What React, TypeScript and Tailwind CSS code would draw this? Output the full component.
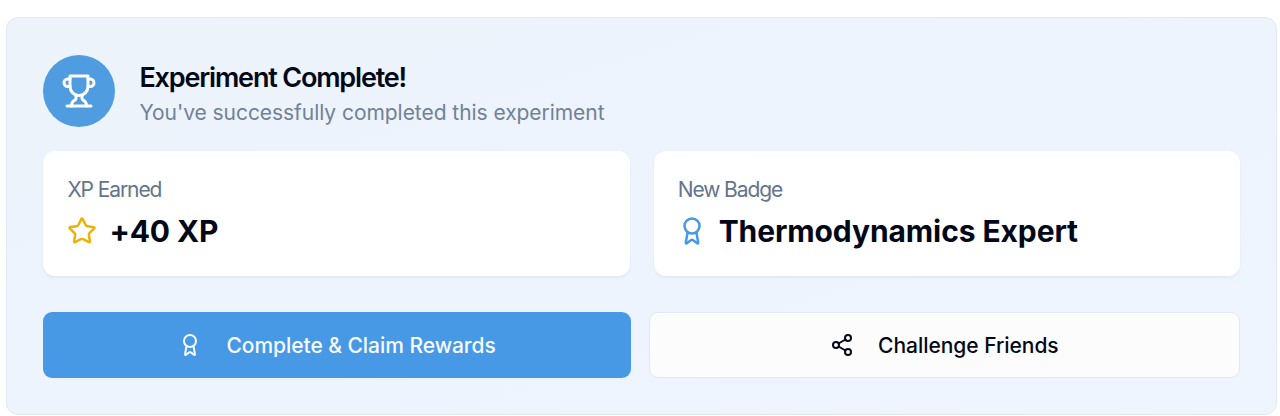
import { Award, Share2, Star } from "lucide-react";

function Trophy() {
  return (
    <svg
      className="size-9 text-white"
      viewBox="0 0 24 24"
      fill="none"
      stroke="currentColor"
      strokeWidth="2"
      strokeLinecap="round"
      strokeLinejoin="round"
    >
      <path d="M6 9H4.5a2.5 2.5 0 0 1 0-5H6" />
      <path d="M18 9h1.5a2.5 2.5 0 0 0 0-5H18" />
      <path d="M4 22h16" />
      <path d="M10 14.66V17c0 .55-.47.98-.97 1.21C7.85 18.75 7 20.24 7 22" />
      <path d="M14 14.66V17c0 .55.47.98.97 1.21C16.15 18.75 17 20.24 17 22" />
      <path d="M18 2H6v7a6 6 0 0 0 12 0V2Z" />
    </svg>
  );
}

export default function App() {
  return (
    <div className="h-[416px] bg-white pt-[17px] pl-[6.4px] font-['Inter',sans-serif] whitespace-nowrap text-[#020817]">
      <section className="h-[398px] w-[1270.6px] rounded-xl border-[1.5px] border-[#e2e8f0] bg-linear-to-br from-[#ecf3fb] to-[#eff5ff] pt-[37px] pr-9 pl-9">
        <header className="flex h-[72px] items-center gap-6">
          <div className="flex size-[72px] items-center justify-center rounded-full bg-[#4f9de0]">
            <Trophy />
          </div>
          <div className="pt-[7px]">
            <h2 className="text-[27px] leading-9 font-semibold tracking-[-1.17px]">Experiment Complete!</h2>
            <p className="text-[21px] leading-[34px] tracking-[-0.05px] text-[#718198]">You've successfully completed this experiment</p>
          </div>
        </header>

        <div className="mt-6 grid grid-cols-2 gap-6">
          <div className="h-[125px] rounded-xl bg-white px-6 pt-6 shadow-[0_1.5px_3px_rgba(0,0,0,0.05)]">
            <p className="text-[21px] leading-[30px] tracking-[-1.1px] text-[#64748b]">XP Earned</p>
            <div className="mt-[5px] flex h-[42px] items-center gap-3">
              <Star className="size-[30px] text-[#eab308]" />
              <span className="text-[30px] leading-[42px] font-bold tracking-[-0.1px]">+40 XP</span>
            </div>
          </div>
          <div className="h-[125px] rounded-xl bg-white px-6 pt-6 shadow-[0_1.5px_3px_rgba(0,0,0,0.05)]">
            <p className="text-[21px] leading-[30px] tracking-[-1.1px] text-[#64748b]">New Badge</p>
            <div className="mt-[5px] flex h-[42px] items-center gap-3">
              <Award className="-ml-px size-[30px] text-[#4799e6]" />
              <span className="text-[30px] leading-[42px] font-bold tracking-[-0.1px]">Thermodynamics Expert</span>
            </div>
          </div>
        </div>

        <div className="mt-9 flex items-center gap-[18px] text-[21px] font-medium tracking-[-0.04px]">
          <button className="flex h-[66px] w-[587.4px] items-center justify-center gap-6 rounded-[9px] bg-[#4799e6] text-[#f8fafc]">
            <Award className="size-6" />
            <span className="pt-px">Complete &amp; Claim Rewards</span>
          </button>
          <button className="flex h-[66px] flex-1 items-center justify-center gap-6 rounded-[9px] border-[1.5px] border-[#e2e8f0] bg-[#fcfcfc]">
            <Share2 className="size-6" />
            <span className="pt-px">Challenge Friends</span>
          </button>
        </div>
      </section>
    </div>
  );
}
